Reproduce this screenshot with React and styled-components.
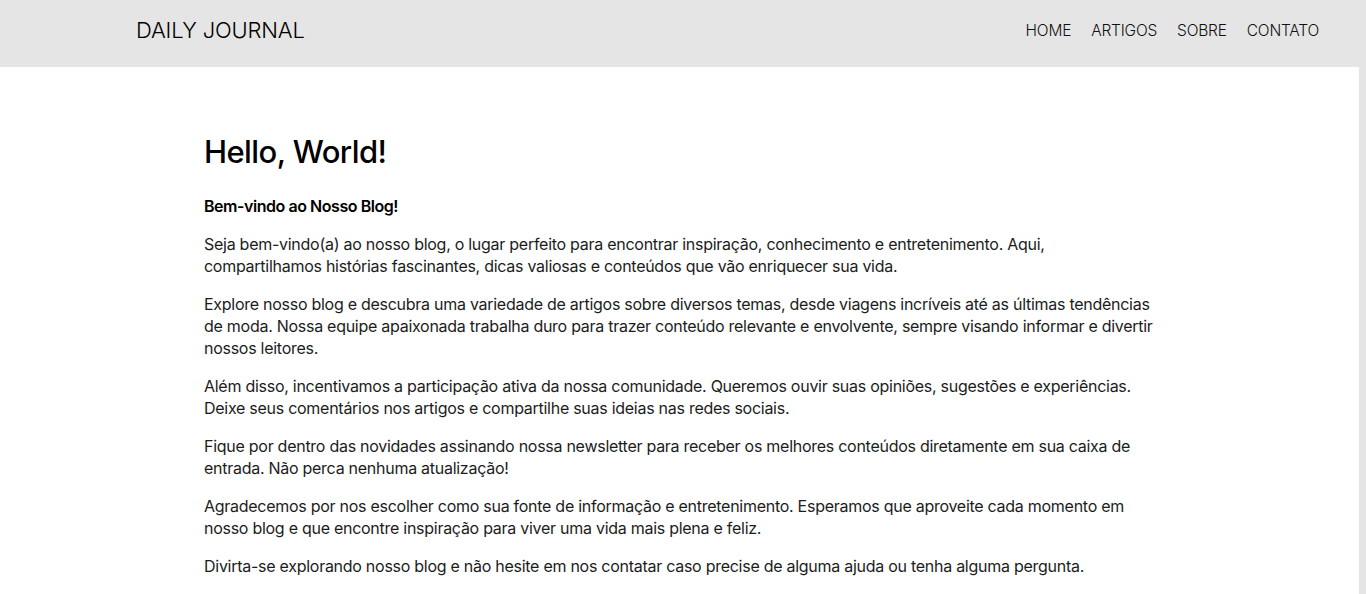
import React from 'react';
import styled, { createGlobalStyle } from 'styled-components';

const GlobalStyle = createGlobalStyle`
	* {
		box-sizing: border-box;
	}

	body {
		margin: 0;
		background: #e5e5e5;
		font-family: Inter, 'Noto Sans', Arial, sans-serif;
		color: #1a1a1a;
	}
`;

const Page = styled.div`
	display: flex;
	flex-direction: column;
	min-height: 594px;
`;

const Header = styled.header`
	height: 67px;
	background: #e5e5e5;
	display: flex;
	align-items: center;
	justify-content: space-between;
	padding: 0 47px 7px 136px;
`;

const Logo = styled.a`
	font-size: 22px;
	font-weight: 300;
	color: #000;
	text-decoration: none;
	letter-spacing: -0.2px;
`;

const Nav = styled.nav`
	display: flex;
	gap: 20px;
`;

const NavLink = styled.a`
	font-size: 15.5px;
	font-weight: 300;
	color: #111;
	text-decoration: none;
	text-transform: uppercase;
	letter-spacing: -0.2px;
`;

const Main = styled.main`
	flex: 1;
	background: #fff;
	margin-right: 7px;
	padding: 65px 0 40px;
`;

const Article = styled.article`
	max-width: 951px;
	margin: 0 auto;
`;

const Title = styled.h1`
	margin: 0 0 23px;
	font-size: 31px;
	font-weight: 500;
	color: #000;
	letter-spacing: -0.6px;
	line-height: 40px;
`;

const Paragraph = styled.p`
	margin: 0 0 16px;
	font-size: 16px;
	line-height: 22px;
	font-weight: ${({ $strong }) => ($strong ? 600 : 400)};
	color: ${({ $strong }) => ($strong ? '#000' : '#1c1c1c')};
	letter-spacing: ${({ $strong }) => ($strong ? '-0.45px' : '-0.27px')};
`;

const paragraphs = [
	'Seja bem-vindo(a) ao nosso blog, o lugar perfeito para encontrar inspiração, conhecimento e entretenimento. Aqui, compartilhamos histórias fascinantes, dicas valiosas e conteúdos que vão enriquecer sua vida.',
	'Explore nosso blog e descubra uma variedade de artigos sobre diversos temas, desde viagens incríveis até as últimas tendências de moda. Nossa equipe apaixonada trabalha duro para trazer conteúdo relevante e envolvente, sempre visando informar e divertir nossos leitores.',
	'Além disso, incentivamos a participação ativa da nossa comunidade. Queremos ouvir suas opiniões, sugestões e experiências. Deixe seus comentários nos artigos e compartilhe suas ideias nas redes sociais.',
	'Fique por dentro das novidades assinando nossa newsletter para receber os melhores conteúdos diretamente em sua caixa de entrada. Não perca nenhuma atualização!',
	'Agradecemos por nos escolher como sua fonte de informação e entretenimento. Esperamos que aproveite cada momento em nosso blog e que encontre inspiração para viver uma vida mais plena e feliz.',
	'Divirta-se explorando nosso blog e não hesite em nos contatar caso precise de alguma ajuda ou tenha alguma pergunta.',
];

const App = () => {
	return (
		<Page>
			<GlobalStyle />
			<Header>
				<Logo href="#">DAILY JOURNAL</Logo>
				<Nav>
					<NavLink href="#">Home</NavLink>
					<NavLink href="#">Artigos</NavLink>
					<NavLink href="#">Sobre</NavLink>
					<NavLink href="#">Contato</NavLink>
				</Nav>
			</Header>
			<Main>
				<Article>
					<Title>Hello, World!</Title>
					<Paragraph $strong>Bem-vindo ao Nosso Blog!</Paragraph>
					{paragraphs.map((text) => (
						<Paragraph key={text.slice(0, 20)}>{text}</Paragraph>
					))}
				</Article>
			</Main>
		</Page>
	);
};

export default App;
